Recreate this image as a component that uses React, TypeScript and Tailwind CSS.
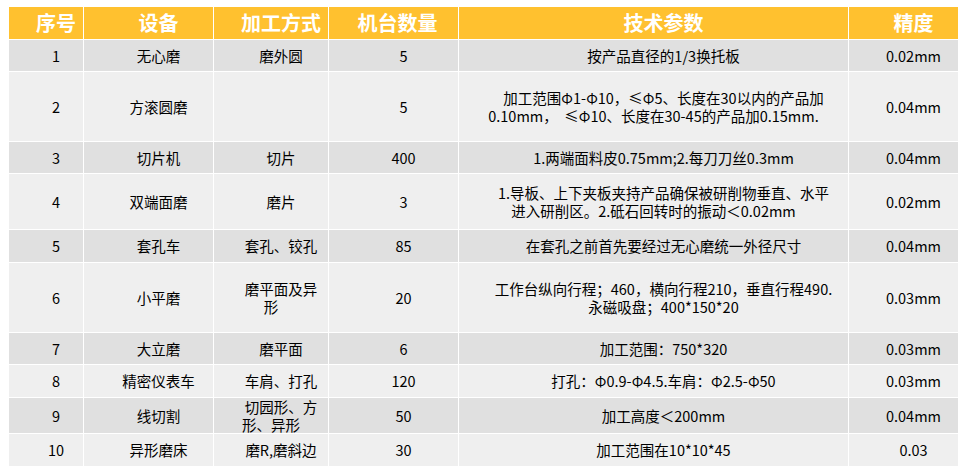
import React from 'react'

type Row = {
  h: string
  cells: (string | string[])[]
}

const headers = ['序号', '设备', '加工方式', '机台数量', '技术参数', '精度']

const rows: Row[] = [
  { h: 'h-[31px]', cells: ['1', '无心磨', '磨外圆', '5', '按产品直径的1/3换托板', '0.02mm'] },
  {
    h: 'h-[69px]',
    cells: [
      '2',
      '方滚圆磨',
      '',
      '5',
      ['加工范围Φ1-Φ10，≤Φ5、长度在30以内的产品加', '0.10mm，  ≤Φ10、长度在30-45的产品加0.15mm.'],
      '0.04mm'
    ]
  },
  { h: 'h-[31px]', cells: ['3', '切片机', '切片', '400', '1.两端面料皮0.75mm;2.每刀刀丝0.3mm', '0.04mm'] },
  {
    h: 'h-[55px]',
    cells: [
      '4',
      '双端面磨',
      '磨片',
      '3',
      ['1.导板、上下夹板夹持产品确保被研削物垂直、水平', '进入研削区。2.砥石回转时的振动＜0.02mm'],
      '0.02mm'
    ]
  },
  { h: 'h-[32px]', cells: ['5', '套孔车', '套孔、铰孔', '85', '在套孔之前首先要经过无心磨统一外径尺寸', '0.04mm'] },
  {
    h: 'h-[69px]',
    cells: [
      '6',
      '小平磨',
      ['磨平面及异', '形'],
      '20',
      ['工作台纵向行程；460，横向行程210，垂直行程490.', '>永磁吸盘；400*150*20'],
      '0.03mm'
    ]
  },
  { h: 'h-[31px]', cells: ['7', '大立磨', '磨平面', '6', '加工范围：750*320', '0.03mm'] },
  { h: 'h-[32px]', cells: ['8', '精密仪表车', '车肩、打孔', '120', '打孔：Φ0.9-Φ4.5.车肩：Φ2.5-Φ50', '0.03mm'] },
  { h: 'h-[35px]', cells: ['9', '线切割', ['切园形、方', '形、异形'], '50', '加工高度＜200mm', '0.04mm'] },
  { h: 'h-[32px]', cells: ['10', '异形磨床', '磨R,磨斜边', '30', '加工范围在10*10*45', '0.03'] }
]

// first line of every cell is pushed right a bit, like the leading spaces in the source sheet
function Lines({ value }: { value: string | string[] }) {
  const lines = typeof value === 'string' ? [value] : value
  return (
    <div className="w-full">
      {lines.map((line, i) => {
        const indent = i === 0 || line.startsWith('>')
        return (
          <div
            key={i}
            className={`whitespace-pre text-center ${indent ? 'pl-5' : ''} ${lines.length > 1 ? 'leading-[18px]' : 'leading-[20px]'}`}
          >
            {line.replace(/^>/, '')}
          </div>
        )
      })}
    </div>
  )
}

export default function App() {
  return (
    <div
      className="w-[970px] h-[474px] bg-white pl-[9px] pt-[7px]"
      style={{ fontFamily: '"Noto Sans CJK SC", "Noto Sans", sans-serif' }}
    >
      <div className="grid grid-cols-[74px_129px_114px_129px_389px_109px] gap-px w-[949px] bg-white">
        {headers.map((h, i) => (
          <div
            key={h}
            className="h-[32px] bg-[#ffc12f] flex items-center justify-center text-white font-bold text-[20px] leading-none"
          >
            <span className={`w-full text-center ${i === 3 ? 'pl-2' : 'pl-5'}`}>{h}</span>
          </div>
        ))}
        {rows.map((row, r) =>
          row.cells.map((c, ci) => (
            <div
              key={`${r}-${ci}`}
              className={`${row.h} ${r % 2 === 0 ? 'bg-[#e0e0e0]' : 'bg-[#efefef]'} flex items-center text-[14.5px] text-black px-1`}
            >
              <Lines value={c} />
            </div>
          ))
        )}
      </div>
    </div>
  )
}
